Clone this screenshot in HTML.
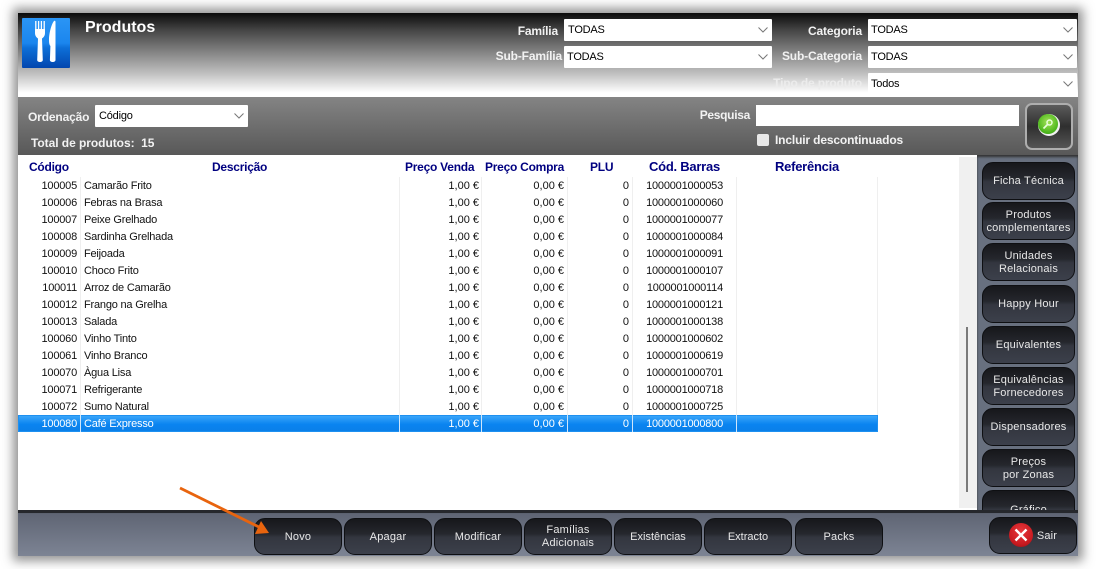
<!DOCTYPE html>
<html><head><meta charset="utf-8"><style>
*{box-sizing:border-box}
html,body{margin:0;padding:0;width:1096px;height:569px;background:#fff;overflow:hidden;font-family:"Liberation Sans",sans-serif}
#root{position:absolute;left:0;top:0;width:1096px;height:569px;filter:blur(.35px);overflow:hidden}
.a{position:absolute;white-space:nowrap}
#shadow{left:18px;top:13px;width:1060px;height:543px;box-shadow:0 0 10px 5px rgba(60,60,60,.55);background:#777}
#head{left:18px;top:13px;width:1060px;height:84px;background:linear-gradient(#0a0a0a 0,#444 20%,#808080 45%,#c0c0c0 72%,#fff 95%)}
#bar{left:18px;top:97px;width:1060px;height:58px;background:linear-gradient(#848484,#585858)}
#tbl{left:18px;top:155px;width:959px;height:355px;background:#fff}
#strip{left:959px;top:157px;width:18px;height:351px;background:#f0f0f0}
#side{left:977px;top:155px;width:101px;height:355px;background:#68707f;overflow:hidden;box-shadow:inset 0 2px 2px #333}
#bot{left:18px;top:510px;width:1060px;height:46px;background:linear-gradient(#2a2d33 0,#5f6574 8%,#7d8494 100%)}
.lb{font-weight:bold;font-size:12px;color:#f2f2f2;text-align:right;line-height:14px;letter-spacing:-.15px}
.sel{position:absolute;background:#fff;height:22px;font-size:11px;color:#000;line-height:23px;padding-left:4px;border-radius:1px;letter-spacing:-.2px}
.sel svg{position:absolute;right:4px;top:8px}
.h{position:absolute;top:160px;font-weight:bold;font-size:12px;color:#000080;line-height:14px;letter-spacing:-.25px}
.c{position:absolute;font-size:11px;line-height:17px;height:17px;color:#111}
.t{letter-spacing:-.2px}
.r{text-align:right}
.sep{position:absolute;top:177px;width:1px;height:255px;background:#efefef}
#sel{left:18px;top:415px;width:860px;height:17px;background:linear-gradient(#3fa9fb,#0a84f0 55%,#0a7fe8);box-shadow:inset 0 0 0 1px #1e90f0}
.btn{position:absolute;border-radius:11px;background:linear-gradient(#16171b 0,#25272d 42%,#33363f 52%,#3c404b 100%);border:1px solid #0e0f12;color:#e8e8e8;font-size:11px;line-height:13px;text-align:center;display:flex;align-items:center;justify-content:center;letter-spacing:.2px;padding-top:1px}
</style></head><body><div id="root">
<div class="a" id="shadow"></div>
<div class="a" id="head"></div>
<div class="a" id="bar"></div>
<div class="a" id="tbl"></div>
<div class="a" id="strip"></div>
<div class="a" style="left:966px;top:327px;width:2px;height:165px;background:#7a7a7a"></div>
<div class="a" id="bot"></div>

<div class="a" style="left:22px;top:18px;width:48px;height:50px;background:linear-gradient(#2b95f5 0,#1b86ee 50%,#0d6fd8 60%,#0346ae 100%);border-radius:1px"></div>
<svg class="a" style="left:22px;top:18px" width="48" height="50" viewBox="0 0 48 50">
<path d="M13.800 3v10M16.600 3v10M19.400 3v10M22.200 3v10" stroke="#fff" stroke-width="1.300" fill="none"/>
<path d="M13 11h10v4c0 3-1.600 4.500-3 5.500l.8 21.500c0 2.700-5.600 2.700-5.600 0l.8-21.500c-1.400-1-3-2.500-3-5.500z" fill="#fff"/>
<path d="M32 3c1-.5 1.500 0 1.500 1v38c0 2.700-5.600 2.700-5.600 0l.5-14c-1-1-1.400-3-1.400-6 0-7 2.500-16 5-19z" fill="#fff"/>
</svg>
<div class="a" style="left:85px;top:18px;font-size:16px;font-weight:bold;color:#fff;line-height:19px">Produtos</div>

<div class="a lb" style="right:538px;top:24px">Família</div>
<div class="sel" style="left:564px;top:19px;width:208px">TODAS<svg width="10" height="6"><path d="M.5.5l4.500 4.500 4.500-4.500" stroke="#777" fill="none"/></svg></div>
<div class="a lb" style="right:534px;top:49px">Sub-Família</div>
<div class="sel" style="left:564px;top:46px;width:208px;padding-left:3px">TODAS<svg width="10" height="6"><path d="M.5.5l4.500 4.500 4.500-4.500" stroke="#777" fill="none"/></svg></div>
<div class="a lb" style="right:234px;top:24px">Categoria</div>
<div class="sel" style="left:868px;top:19px;width:209px;padding-left:3px">TODAS<svg width="10" height="6"><path d="M.5.5l4.500 4.500 4.500-4.500" stroke="#777" fill="none"/></svg></div>
<div class="a lb" style="right:234px;top:49px">Sub-Categoria</div>
<div class="sel" style="left:868px;top:46px;width:209px;padding-left:3px">TODAS<svg width="10" height="6"><path d="M.5.5l4.500 4.500 4.500-4.500" stroke="#777" fill="none"/></svg></div>
<div class="a lb" style="right:234px;top:76px;color:#ececec">Tipo de produto</div>
<div class="sel" style="left:868px;top:73px;width:209px;height:21px;padding-left:3px">Todos<svg width="10" height="6"><path d="M.5.5l4.500 4.500 4.500-4.500" stroke="#777" fill="none"/></svg></div>

<div class="a lb" style="left:28px;top:110px">Ordenação</div>
<div class="sel" style="left:95px;top:105px;width:153px">Código<svg width="10" height="6"><path d="M.5.5l4.500 4.500 4.500-4.500" stroke="#777" fill="none"/></svg></div>
<div class="a lb" style="left:31px;top:136px;letter-spacing:-.05px">Total de produtos:&nbsp; 15</div>
<div class="a lb" style="right:346px;top:108px;letter-spacing:-.3px">Pesquisa</div>
<div class="a" style="left:756px;top:105px;width:263px;height:21px;background:#fff"></div>
<div class="a" style="left:757px;top:134px;width:12px;height:12px;background:#e8e8e8;border-radius:2px"></div>
<div class="a lb" style="left:775px;top:133px">Incluir descontinuados</div>
<div class="a" style="left:1025px;top:103px;width:48px;height:47px;border:2px solid #aeaeae;border-radius:7px;background:linear-gradient(#5c5c5c,#2f2f2f 50%,#555)"></div>
<div class="a" style="left:1038px;top:114px;width:22px;height:22px;border-radius:50%;background:#f0f0f0"></div>
<div class="a" style="left:1038px;top:114px;width:20px;height:20px;border-radius:50%;background:radial-gradient(circle at 50% 40%,#a5e35a,#4fb81e 65%,#2e8f10)"></div>
<svg class="a" style="left:1038px;top:115px" width="19" height="19"><circle cx="11.500" cy="7.500" r="2.500" stroke="#e8ffd8" stroke-width="1.500" fill="none"/><path d="M9.500 9.500l-4 4" stroke="#e8ffd8" stroke-width="1.700"/></svg>

<div class="h" style="left:29px">Código</div>
<div class="h" style="left:212px">Descrição</div>
<div class="h" style="left:405px">Preço Venda</div>
<div class="h" style="left:485px">Preço Compra</div>
<div class="h" style="left:590px">PLU</div>
<div class="h" style="left:649px;font-size:13px">Cód. Barras</div>
<div class="h" style="left:775px;font-size:13px">Referência</div>

<div class="sep" style="left:80px"></div><div class="sep" style="left:399px"></div><div class="sep" style="left:481px"></div><div class="sep" style="left:567px"></div><div class="sep" style="left:632px"></div><div class="sep" style="left:736px"></div><div class="sep" style="left:877px"></div>

<div class="a" id="sel"></div>
<div class="a" style="left:80px;top:415px;width:1px;height:17px;background:#cfe6fb"></div><div class="a" style="left:399px;top:415px;width:1px;height:17px;background:#cfe6fb"></div><div class="a" style="left:481px;top:415px;width:1px;height:17px;background:#cfe6fb"></div><div class="a" style="left:567px;top:415px;width:1px;height:17px;background:#cfe6fb"></div><div class="a" style="left:632px;top:415px;width:1px;height:17px;background:#cfe6fb"></div><div class="a" style="left:736px;top:415px;width:1px;height:17px;background:#cfe6fb"></div>

<div class="c r t" style="left:30px;width:47px;top:178px">100005</div><div class="c t" style="left:84px;top:178px">Camarão Frito</div><div class="c r" style="left:400px;width:79px;top:178px">1,00 €</div><div class="c r" style="left:482px;width:82px;top:178px">0,00 €</div><div class="c r" style="left:568px;width:61px;top:178px">0</div><div class="c r t" style="left:633px;width:90px;top:178px">1000001000053</div>
<div class="c r t" style="left:30px;width:47px;top:195px">100006</div><div class="c t" style="left:84px;top:195px">Febras na Brasa</div><div class="c r" style="left:400px;width:79px;top:195px">1,00 €</div><div class="c r" style="left:482px;width:82px;top:195px">0,00 €</div><div class="c r" style="left:568px;width:61px;top:195px">0</div><div class="c r t" style="left:633px;width:90px;top:195px">1000001000060</div>
<div class="c r t" style="left:30px;width:47px;top:212px">100007</div><div class="c t" style="left:84px;top:212px">Peixe Grelhado</div><div class="c r" style="left:400px;width:79px;top:212px">1,00 €</div><div class="c r" style="left:482px;width:82px;top:212px">0,00 €</div><div class="c r" style="left:568px;width:61px;top:212px">0</div><div class="c r t" style="left:633px;width:90px;top:212px">1000001000077</div>
<div class="c r t" style="left:30px;width:47px;top:229px">100008</div><div class="c t" style="left:84px;top:229px">Sardinha Grelhada</div><div class="c r" style="left:400px;width:79px;top:229px">1,00 €</div><div class="c r" style="left:482px;width:82px;top:229px">0,00 €</div><div class="c r" style="left:568px;width:61px;top:229px">0</div><div class="c r t" style="left:633px;width:90px;top:229px">1000001000084</div>
<div class="c r t" style="left:30px;width:47px;top:246px">100009</div><div class="c t" style="left:84px;top:246px">Feijoada</div><div class="c r" style="left:400px;width:79px;top:246px">1,00 €</div><div class="c r" style="left:482px;width:82px;top:246px">0,00 €</div><div class="c r" style="left:568px;width:61px;top:246px">0</div><div class="c r t" style="left:633px;width:90px;top:246px">1000001000091</div>
<div class="c r t" style="left:30px;width:47px;top:263px">100010</div><div class="c t" style="left:84px;top:263px">Choco Frito</div><div class="c r" style="left:400px;width:79px;top:263px">1,00 €</div><div class="c r" style="left:482px;width:82px;top:263px">0,00 €</div><div class="c r" style="left:568px;width:61px;top:263px">0</div><div class="c r t" style="left:633px;width:90px;top:263px">1000001000107</div>
<div class="c r t" style="left:30px;width:47px;top:280px">100011</div><div class="c t" style="left:84px;top:280px">Arroz de Camarão</div><div class="c r" style="left:400px;width:79px;top:280px">1,00 €</div><div class="c r" style="left:482px;width:82px;top:280px">0,00 €</div><div class="c r" style="left:568px;width:61px;top:280px">0</div><div class="c r t" style="left:633px;width:90px;top:280px">1000001000114</div>
<div class="c r t" style="left:30px;width:47px;top:297px">100012</div><div class="c t" style="left:84px;top:297px">Frango na Grelha</div><div class="c r" style="left:400px;width:79px;top:297px">1,00 €</div><div class="c r" style="left:482px;width:82px;top:297px">0,00 €</div><div class="c r" style="left:568px;width:61px;top:297px">0</div><div class="c r t" style="left:633px;width:90px;top:297px">1000001000121</div>
<div class="c r t" style="left:30px;width:47px;top:314px">100013</div><div class="c t" style="left:84px;top:314px">Salada</div><div class="c r" style="left:400px;width:79px;top:314px">1,00 €</div><div class="c r" style="left:482px;width:82px;top:314px">0,00 €</div><div class="c r" style="left:568px;width:61px;top:314px">0</div><div class="c r t" style="left:633px;width:90px;top:314px">1000001000138</div>
<div class="c r t" style="left:30px;width:47px;top:331px">100060</div><div class="c t" style="left:84px;top:331px">Vinho Tinto</div><div class="c r" style="left:400px;width:79px;top:331px">1,00 €</div><div class="c r" style="left:482px;width:82px;top:331px">0,00 €</div><div class="c r" style="left:568px;width:61px;top:331px">0</div><div class="c r t" style="left:633px;width:90px;top:331px">1000001000602</div>
<div class="c r t" style="left:30px;width:47px;top:348px">100061</div><div class="c t" style="left:84px;top:348px">Vinho Branco</div><div class="c r" style="left:400px;width:79px;top:348px">1,00 €</div><div class="c r" style="left:482px;width:82px;top:348px">0,00 €</div><div class="c r" style="left:568px;width:61px;top:348px">0</div><div class="c r t" style="left:633px;width:90px;top:348px">1000001000619</div>
<div class="c r t" style="left:30px;width:47px;top:365px">100070</div><div class="c t" style="left:84px;top:365px">Àgua Lisa</div><div class="c r" style="left:400px;width:79px;top:365px">1,00 €</div><div class="c r" style="left:482px;width:82px;top:365px">0,00 €</div><div class="c r" style="left:568px;width:61px;top:365px">0</div><div class="c r t" style="left:633px;width:90px;top:365px">1000001000701</div>
<div class="c r t" style="left:30px;width:47px;top:382px">100071</div><div class="c t" style="left:84px;top:382px">Refrigerante</div><div class="c r" style="left:400px;width:79px;top:382px">1,00 €</div><div class="c r" style="left:482px;width:82px;top:382px">0,00 €</div><div class="c r" style="left:568px;width:61px;top:382px">0</div><div class="c r t" style="left:633px;width:90px;top:382px">1000001000718</div>
<div class="c r t" style="left:30px;width:47px;top:399px">100072</div><div class="c t" style="left:84px;top:399px">Sumo Natural</div><div class="c r" style="left:400px;width:79px;top:399px">1,00 €</div><div class="c r" style="left:482px;width:82px;top:399px">0,00 €</div><div class="c r" style="left:568px;width:61px;top:399px">0</div><div class="c r t" style="left:633px;width:90px;top:399px">1000001000725</div>
<div class="c r t" style="left:30px;width:47px;top:416px;color:#fff">100080</div><div class="c t" style="left:84px;top:416px;color:#fff">Café Expresso</div><div class="c r" style="left:400px;width:79px;top:416px;color:#fff">1,00 €</div><div class="c r" style="left:482px;width:82px;top:416px;color:#fff">0,00 €</div><div class="c r" style="left:568px;width:61px;top:416px;color:#fff">0</div><div class="c r t" style="left:633px;width:90px;top:416px;color:#fff">1000001000800</div>

<div class="a" id="side">
<div class="btn" style="left:5px;top:7px;width:93px;height:38px">Ficha Técnica</div>
<div class="btn" style="left:5px;top:47px;width:93px;height:38px">Produtos<br>complementares</div>
<div class="btn" style="left:5px;top:88px;width:93px;height:38px">Unidades<br>Relacionais</div>
<div class="btn" style="left:5px;top:130px;width:93px;height:38px">Happy Hour</div>
<div class="btn" style="left:5px;top:171px;width:93px;height:38px">Equivalentes</div>
<div class="btn" style="left:5px;top:212px;width:93px;height:38px">Equivalências<br>Fornecedores</div>
<div class="btn" style="left:5px;top:253px;width:93px;height:38px">Dispensadores</div>
<div class="btn" style="left:5px;top:294px;width:93px;height:38px">Preços<br>por Zonas</div>
<div class="btn" style="left:5px;top:335px;width:93px;height:38px;align-items:flex-start;padding-top:13px">Gráfico</div>
</div>
<div class="a" style="left:18px;top:510px;width:1060px;height:3px;background:#26282d"></div>

<div class="btn" style="left:254px;top:518px;width:88px;height:37px">Novo</div>
<div class="btn" style="left:344px;top:518px;width:88px;height:37px">Apagar</div>
<div class="btn" style="left:434px;top:518px;width:88px;height:37px">Modificar</div>
<div class="btn" style="left:524px;top:518px;width:88px;height:37px">Famílias<br>Adicionais</div>
<div class="btn" style="left:614px;top:518px;width:88px;height:37px;letter-spacing:0">Existências</div>
<div class="btn" style="left:704px;top:518px;width:88px;height:37px;letter-spacing:0">Extracto</div>
<div class="btn" style="left:795px;top:518px;width:88px;height:37px">Packs</div>
<div class="btn" style="left:989px;top:517px;width:88px;height:37px;padding-left:28px">Sair</div>
<div class="a" style="left:1009px;top:523px;width:24px;height:24px;border-radius:50%;background:radial-gradient(circle at 50% 35%,#e8383c,#c81a20 65%,#8c0f14)"></div>
<svg class="a" style="left:1009px;top:523px" width="24" height="24"><path d="M6.500 6.500l11 11M17.500 6.500l-11 11" stroke="#fff" stroke-width="2.400"/></svg>

<svg class="a" style="left:175px;top:483px" width="100" height="60">
<path d="M5 5L84 44" stroke="#e8640e" stroke-width="2.800"/>
<path d="M94 50L80 51L86 38z" fill="#e8640e"/>
</svg>
</div></body></html>
